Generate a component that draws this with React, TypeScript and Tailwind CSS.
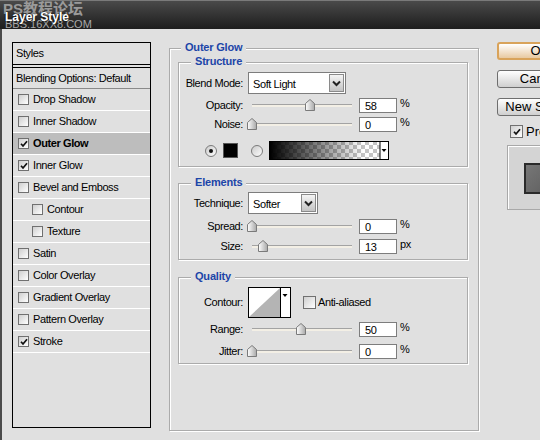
import { FC, ReactNode } from 'react';

const STYLE_ROWS: { label: string; checked?: boolean; indent?: boolean; selected?: boolean }[] = [
  { label: 'Drop Shadow' },
  { label: 'Inner Shadow' },
  { label: 'Outer Glow', checked: true, selected: true },
  { label: 'Inner Glow', checked: true },
  { label: 'Bevel and Emboss' },
  { label: 'Contour', indent: true },
  { label: 'Texture', indent: true },
  { label: 'Satin' },
  { label: 'Color Overlay' },
  { label: 'Gradient Overlay' },
  { label: 'Pattern Overlay' },
  { label: 'Stroke', checked: true },
];

const CheckBox: FC<{ checked?: boolean; big?: boolean }> = ({ checked, big }) => (
  <span
    className={`flex shrink-0 items-center justify-center border border-[#707070] bg-gradient-to-br from-[#cfcfcf] to-white ${
      big ? 'h-[13px] w-[13px]' : 'h-[11px] w-[11px]'
    }`}
  >
    {checked && (
      <svg width="8" height="8" viewBox="0 0 8 8">
        <path d="M1 3.8 L3 6 L7 1.2" stroke="#111" strokeWidth="1.7" fill="none" />
      </svg>
    )}
  </span>
);

const Radio: FC<{ on?: boolean }> = ({ on }) => (
  <svg width="12" height="12" viewBox="0 0 12 12" className="shrink-0">
    <defs>
      <linearGradient id={on ? 'rg1' : 'rg2'} x1="0" y1="0" x2="1" y2="1">
        <stop offset="0" stopColor="#c8c8c8" />
        <stop offset="1" stopColor="#ffffff" />
      </linearGradient>
    </defs>
    <circle cx="6" cy="6" r="5.5" fill={`url(#${on ? 'rg1' : 'rg2'})`} stroke="#7a7a7a" />
    {on && <circle cx="6" cy="6" r="2" fill="#111" />}
  </svg>
);

const Legend: FC<{ children: ReactNode; left: string }> = ({ children, left }) => (
  <span
    className={`absolute top-[-9px] ${left} bg-[#e0e0e0] px-[4px] text-[11px] font-bold leading-[14px] tracking-[-0.2px] text-[#1c45a8]`}
  >
    {children}
  </span>
);

const Dropdown: FC<{ value: string; width: string }> = ({ value, width }) => (
  <div className={`ml-[5px] flex h-[22px] ${width} items-center border border-[#7d7d7d] bg-white`}>
    <span className="flex-1 pl-[4px] pt-[2px]">{value}</span>
    <span className="mr-[1px] flex h-[18px] w-[15px] items-center justify-center border border-[#8a8a8a] bg-gradient-to-b from-[#f4f4f4] to-[#c4c4c4]">
      <svg width="9" height="7" viewBox="0 0 9 7">
        <path d="M1 1.5 L4.5 5 L8 1.5" stroke="#222" strokeWidth="2" fill="none" />
      </svg>
    </span>
  </div>
);

const Slider: FC<{ pos: number }> = ({ pos }) => (
  <div className="relative ml-[5px] h-[15px] w-[104px] shrink-0">
    <div className="absolute left-[4px] right-0 top-[6px] h-[3px] border-t border-[#a3a3a3] bg-[#f3efe5]" />
    <svg
      width="10"
      height="12"
      viewBox="0 0 10 12"
      className="absolute top-[1px]"
      style={{ left: pos - 1 }}
    >
      <defs>
        <linearGradient id="thumb" x1="0" y1="0" x2="1" y2="0">
          <stop offset="0" stopColor="#ffffff" />
          <stop offset="1" stopColor="#a8a8a8" />
        </linearGradient>
      </defs>
      <path d="M0.5 4.5 L5 0.5 L9.5 4.5 L9.5 11.5 L0.5 11.5 Z" fill="url(#thumb)" stroke="#7a7a7a" />
    </svg>
  </div>
);

const SliderRow: FC<{ label: string; pos: number; value: string; unit: string; mt: string }> = ({
  label,
  pos,
  value,
  unit,
  mt,
}) => (
  <div className={`flex h-[15px] items-center ${mt}`}>
    <span className="w-[64px] text-right">{label}</span>
    <Slider pos={pos} />
    <span className="ml-[7px] flex h-[15px] w-[38px] items-center border border-[#7d7d7d] bg-white pl-[5px] pt-[1px]">
      {value}
    </span>
    <span className="ml-[3px] self-start leading-[11px]">{unit}</span>
  </div>
);

const GradientSwatch: FC = () => (
  <svg width="120" height="19" viewBox="0 0 120 19" className="ml-[6px] shrink-0">
    <defs>
      <pattern id="chk" width="8" height="8" patternUnits="userSpaceOnUse">
        <rect width="8" height="8" fill="#ffffff" />
        <rect width="4" height="4" fill="#c4c4c4" />
        <rect x="4" y="4" width="4" height="4" fill="#c4c4c4" />
      </pattern>
      <linearGradient id="fade" x1="0" y1="0" x2="1" y2="0">
        <stop offset="0" stopColor="#000" stopOpacity="1" />
        <stop offset="0.85" stopColor="#000" stopOpacity="0" />
      </linearGradient>
    </defs>
    <rect x="1" y="1" width="110" height="17" fill="url(#chk)" />
    <rect x="1" y="1" width="110" height="17" fill="url(#fade)" />
    <rect x="111" y="1" width="8" height="17" fill="#fff" />
    <path d="M112.5 8 L117.5 8 L115 11 Z" fill="#000" />
    <line x1="111" y1="1" x2="111" y2="18" stroke="#000" />
    <rect x="0.5" y="0.5" width="119" height="18" fill="none" stroke="#000" />
  </svg>
);

const ContourSwatch: FC = () => (
  <svg width="43" height="31" viewBox="0 0 43 31" className="ml-[5px] shrink-0">
    <rect x="1" y="1" width="31" height="29" fill="#fff" />
    <path d="M1 30 L32 1 L32 30 Z" fill="#b4b4b4" />
    <rect x="32" y="1" width="10" height="29" fill="#fff" />
    <path d="M34.5 7 L39.5 7 L37 10 Z" fill="#000" />
    <line x1="32.5" y1="1" x2="32.5" y2="30" stroke="#000" />
    <rect x="0.5" y="0.5" width="42" height="30" fill="none" stroke="#000" />
  </svg>
);

const Button: FC<{ children: ReactNode; primary?: boolean }> = ({ children, primary }) => (
  <div
    className={`flex h-[18px] w-[86px] items-center justify-center rounded-[3px] bg-gradient-to-b from-white to-[#cfcfcf] ${
      primary
        ? 'border-2 border-[#d9a35a] to-[#e8c9a0]'
        : 'border border-[#6e6e6e]'
    } text-[13px]`}
  >
    {children}
  </div>
);

export default function App() {
  return (
    <div className="h-[440px] w-[540px] overflow-hidden bg-[#e0e0e0] font-['Liberation_Sans',Arial,sans-serif] text-[11px] tracking-[-0.4px] text-black">
      {/* title bar */}
      <div className="relative h-[29px] overflow-hidden border-t border-[#7a7a7a] bg-gradient-to-b from-[#4a4a4a] to-[#1e1e1e] tracking-normal">
        <span className="absolute left-[3px] top-[0px] font-['Liberation_Sans','Noto_Sans_CJK_SC',sans-serif] text-[15px] font-bold leading-[16px] text-[#9a9a9a]">
          PS教程论坛
        </span>
        <span className="absolute left-[5px] top-[17px] text-[11px] leading-[12px] text-[#a8a8a8]">
          BBS.16XX8.COM
        </span>
        <span className="absolute left-[5px] top-[9px] text-[12px] font-bold leading-[14px] text-white [text-shadow:0_0_2px_#000]">
          Layer Style
        </span>
      </div>

      {/* body */}
      <div className="flex h-[411px] items-start border-l-2 border-[#4a4a4a]">
        {/* style list */}
        <div className="ml-[10px] mt-[13px] flex h-[386px] w-[139px] shrink-0 flex-col border border-black">
          <div className="flex h-[21px] items-center pl-[3px]">Styles</div>
          <div className="h-[4px] border-y border-black" />
          <div className="flex h-[21px] items-center border-b border-[#8a8a8a] pl-[3px]">
            Blending Options: Default
          </div>
          {STYLE_ROWS.map((r) => (
            <div
              key={r.label}
              className={`flex h-[22px] items-center gap-[4px] border-b border-white ${
                r.indent ? 'pl-[19px]' : 'pl-[5px]'
              } ${r.selected ? 'bg-[#bdbdbd] font-bold' : ''}`}
            >
              <CheckBox checked={r.checked} />
              <span>{r.label}</span>
            </div>
          ))}
        </div>

        {/* outer glow panel */}
        <div className="relative ml-[18px] mt-[19px] h-[383px] w-[310px] shrink-0 border border-[#ababab] pl-[8px] pt-[13px] shadow-[inset_1px_1px_0_#fff,1px_1px_0_#fff]">
          <Legend left="left-[11px]">Outer Glow</Legend>

          {/* Structure */}
          <div className="relative flex w-[290px] flex-col border border-[#ababab] pb-[6px] shadow-[inset_1px_1px_0_#fff,1px_1px_0_#fff]">
            <Legend left="left-[12px]">Structure</Legend>
            <div className="mt-[9px] flex h-[22px] items-center">
              <span className="w-[64px] text-right">Blend Mode:</span>
              <Dropdown value="Soft Light" width="w-[98px]" />
            </div>
            <SliderRow label="Opacity:" pos={58} value="58" unit="%" mt="mt-[4px]" />
            <SliderRow label="Noise:" pos={0} value="0" unit="%" mt="mt-[4px]" />
            <div className="mt-[9px] flex h-[19px] items-center pl-[26px]">
              <Radio on />
              <span className="ml-[6px] h-[15px] w-[15px] border border-[#555] bg-black" />
              <span className="ml-[13px] flex">
                <Radio />
              </span>
              <GradientSwatch />
            </div>
          </div>

          {/* Elements */}
          <div className="relative mt-[16px] flex w-[290px] flex-col border border-[#ababab] pb-[5px] shadow-[inset_1px_1px_0_#fff,1px_1px_0_#fff]">
            <Legend left="left-[12px]">Elements</Legend>
            <div className="mt-[8px] flex h-[22px] items-center">
              <span className="w-[64px] text-right">Technique:</span>
              <Dropdown value="Softer" width="w-[70px]" />
            </div>
            <SliderRow label="Spread:" pos={0} value="0" unit="%" mt="mt-[5px]" />
            <SliderRow label="Size:" pos={11} value="13" unit="px" mt="mt-[5px]" />
          </div>

          {/* Quality */}
          <div className="relative mt-[17px] flex w-[290px] flex-col border border-[#ababab] pb-[4px] shadow-[inset_1px_1px_0_#fff,1px_1px_0_#fff]">
            <Legend left="left-[12px]">Quality</Legend>
            <div className="mt-[9px] flex h-[30px] items-center">
              <span className="w-[64px] text-right">Contour:</span>
              <ContourSwatch />
              <span className="ml-[12px] flex items-center gap-[2px]">
                <CheckBox big />
                <span>Anti-aliased</span>
              </span>
            </div>
            <SliderRow label="Range:" pos={49} value="50" unit="%" mt="mt-[5px]" />
            <SliderRow label="Jitter:" pos={0} value="0" unit="%" mt="mt-[7px]" />
          </div>
        </div>

        {/* buttons */}
        <div className="ml-[18px] mt-[13px] flex w-[86px] shrink-0 flex-col gap-[10px] tracking-normal">
          <Button primary>OK</Button>
          <Button>Cancel</Button>
          <Button>New Style...</Button>
          <div className="-mt-[1px] flex h-[13px] items-center gap-[3px] pl-[13px] text-[13px]">
            <CheckBox checked big />
            <span>Preview</span>
          </div>
          <div className="-mt-[3px] ml-[10px] h-[65px] w-[76px] border border-[#a8a8a8] bg-[#d4d4d4] pl-[16px] pt-[17px] shadow-[inset_1px_1px_0_#fff]">
            <div className="h-[31px] w-[31px] border-2 border-[#2a2a2a] bg-gradient-to-br from-[#777] to-[#5e5e5e]" />
          </div>
        </div>
      </div>
    </div>
  );
}
